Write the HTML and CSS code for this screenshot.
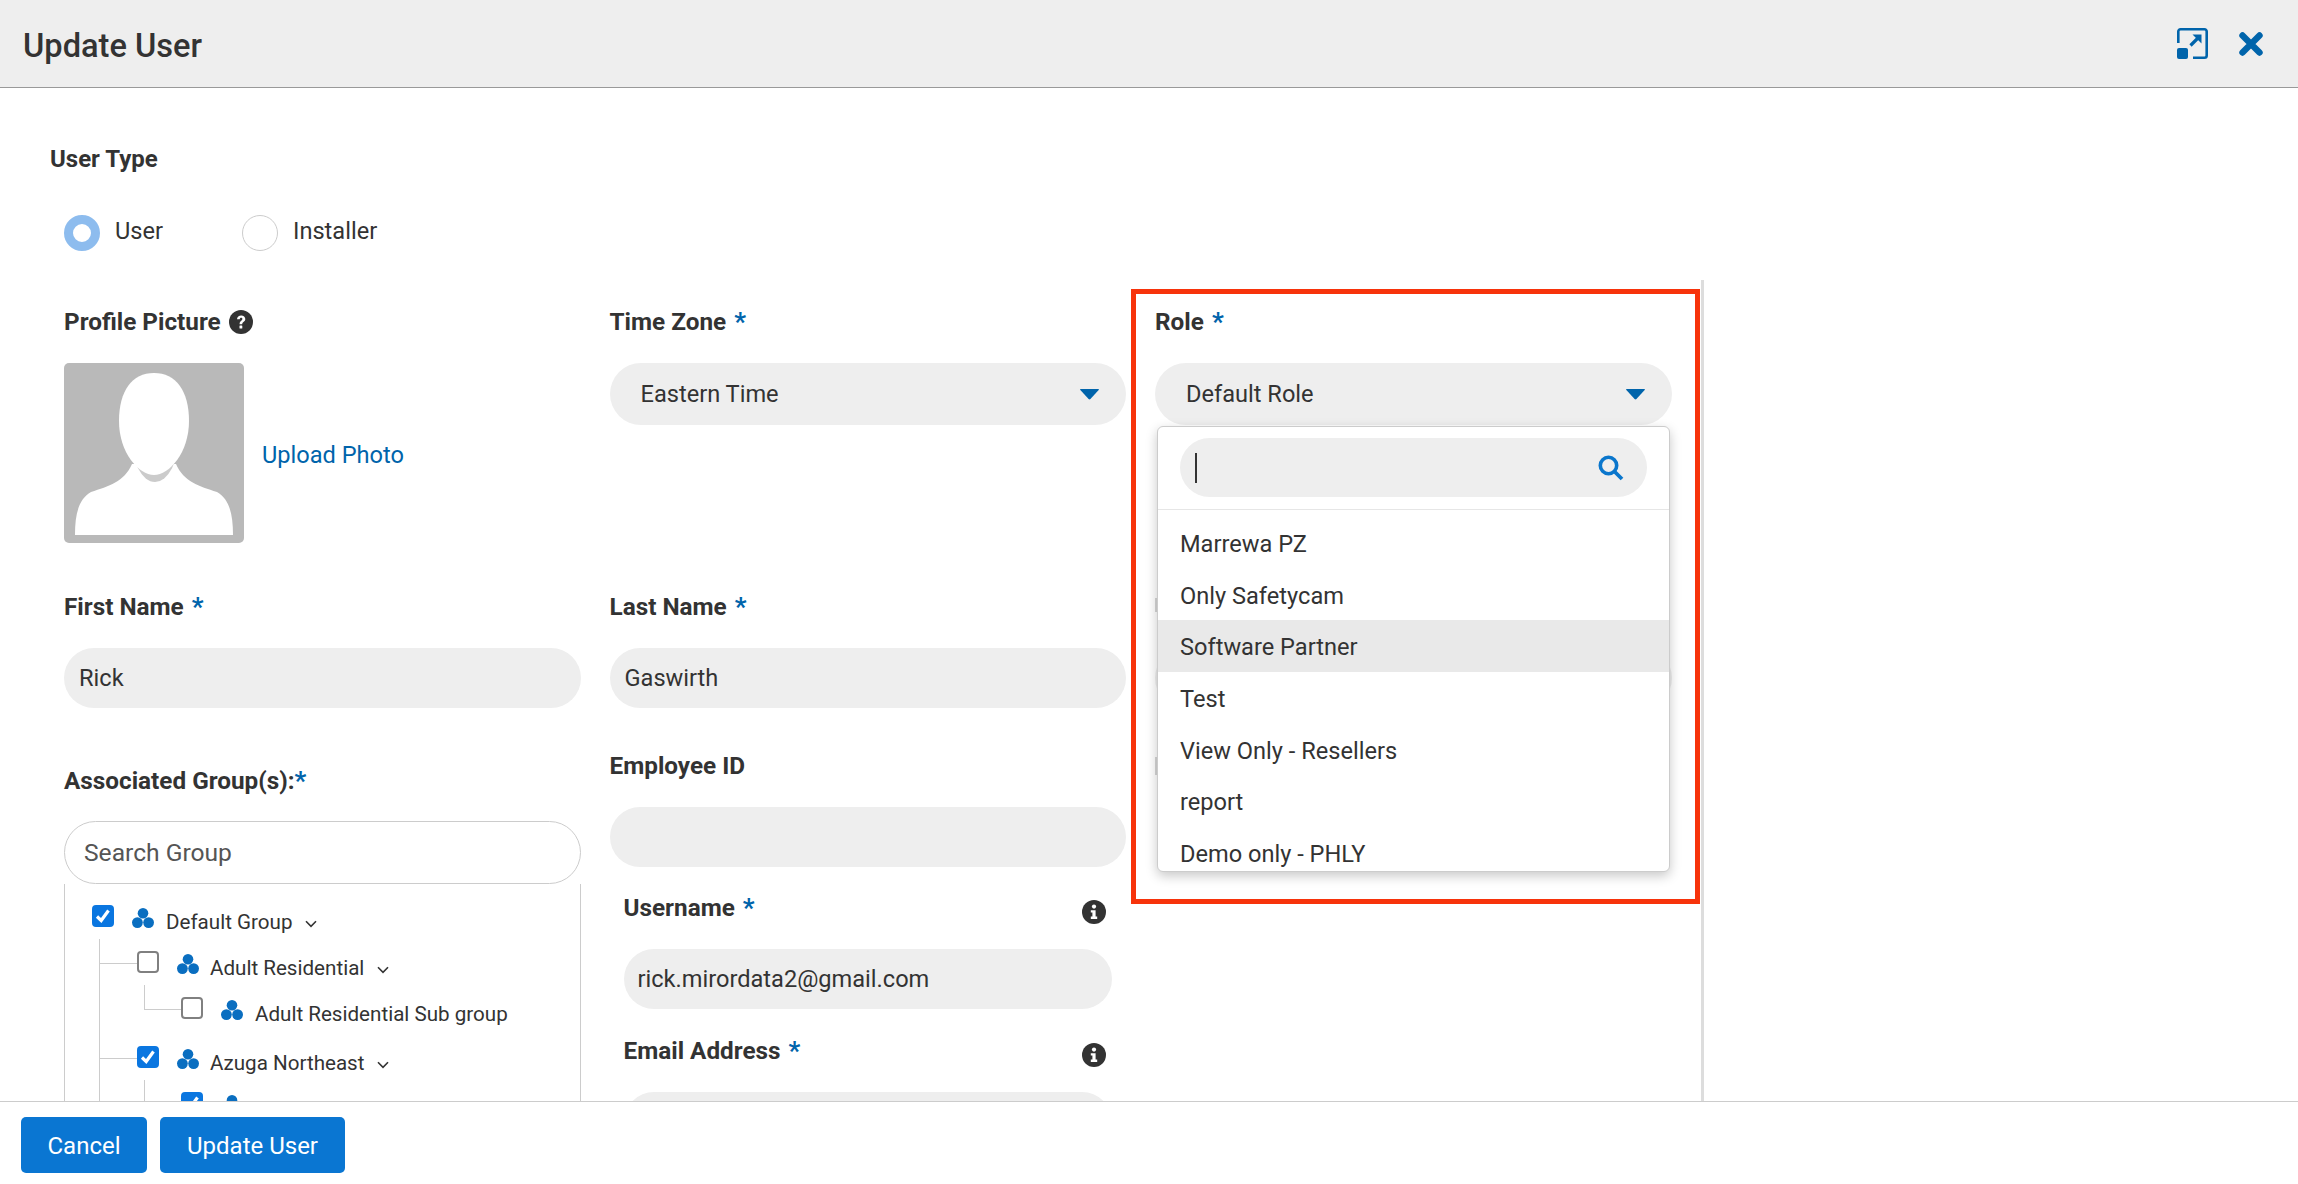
FILE: index.html
```html
<!DOCTYPE html>
<html lang="en">
<head>
<meta charset="utf-8">
<title>Update User</title>
<link rel="stylesheet" href="styles.css">
</head>
<body>
<svg class="defs" width="0" height="0" aria-hidden="true">
  <symbol id="grp" viewBox="0 0 22 20"><circle cx="11" cy="5.3" r="5.3"/><circle cx="5.4" cy="14.6" r="5.4"/><circle cx="16.6" cy="14.6" r="5.4"/></symbol>
  <symbol id="chev" viewBox="0 0 12 8"><path d="M1 1.2 6 6.4 11 1.2" fill="none" stroke="#333" stroke-width="1.6"/></symbol>
  <symbol id="caret" viewBox="0 0 22 12"><path d="M1.5 0H20.5Q22 0 21 1.2L12 11Q11 12 10 11L1 1.2Q0 0 1.5 0Z"/></symbol>
  <symbol id="tick" viewBox="0 0 22 22"><path d="M5 11.5 9.2 15.5 16.5 5.5" fill="none" stroke="#fff" stroke-width="3.2"/></symbol>
  <symbol id="info" viewBox="0 0 24 24"><circle cx="12" cy="12" r="12" fill="#333"/><circle cx="12" cy="6.6" r="2.1" fill="#fff"/><path d="M8.8 10.2H13.6V16.6H15.2V19H8.8V16.6H10.4V12.6H8.8Z" fill="#fff"/></symbol>
</svg>

<header class="topbar">
  <h1 class="title">Update User</h1>
  <div class="topicons">
    <svg class="ico-expand" viewBox="0 0 31 31"><path d="M1.3 15V3.5A2.2 2.2 0 0 1 3.5 1.3H27.5A2.2 2.2 0 0 1 29.7 3.5V27.5A2.2 2.2 0 0 1 27.5 29.7H16" fill="none" stroke="#0064ab" stroke-width="2.6"/><rect x="0" y="20" width="11" height="11" rx="2" fill="#0064ab"/><path d="M13.5 17.5 22 9" fill="none" stroke="#0064ab" stroke-width="3.2"/><path d="M15.5 6.5H24.5V15.5Z" fill="#0064ab"/></svg>
    <svg class="ico-close" viewBox="0 0 24 24"><path d="M3.5 3.5 20.5 20.5M20.5 3.5 3.5 20.5" fill="none" stroke="#0064ab" stroke-width="6.4" stroke-linecap="round"/></svg>
  </div>
</header>

<main class="content">
  <div class="type-title">User Type</div>
  <div class="radios">
    <span class="radio radio-on"></span><span class="radio-text">User</span>
    <span class="radio"></span><span class="radio-text">Installer</span>
  </div>

  <div class="form-grid">
    <section class="col">
      <div class="label">Profile Picture <svg class="help" viewBox="0 0 24 24"><circle cx="12" cy="12" r="12" fill="#333"/><path d="M8 9.3C8 6.8 10 5.4 12.2 5.4 14.6 5.4 16.3 6.9 16.3 9 16.3 11.8 13.2 11.8 13.2 14.2H10.6C10.6 10.8 13.4 10.8 13.4 9.1 13.4 8.3 12.9 7.8 12.1 7.8 11.2 7.8 10.8 8.4 10.7 9.3Z" fill="#fff"/><rect x="10.5" y="15.6" width="2.8" height="2.8" rx=".5" fill="#fff"/></svg></div>
      <div class="photo-row">
        <svg class="avatar" viewBox="0 0 180 180">
          <rect width="180" height="180" rx="5" fill="#b9b9b9"/>
          <path d="M11 172C11 150 15 136 27 129 45 123 60 119 68 101H112C120 119 135 123 153 129 165 136 169 150 169 172Z" fill="#fff"/>
          <ellipse cx="91" cy="72" rx="24" ry="47" fill="#cbcbcb"/>
          <path d="M90 10C112 10 125 28 125 58 125 90 105 112 90 112 75 112 55 90 55 58 55 28 68 10 90 10Z" fill="#fff"/>
        </svg>
        <a class="link">Upload Photo</a>
      </div>
      <div class="label first-name">First Name <span class="req">*</span></div>
      <div class="pill input-sm">Rick</div>
      <div class="label assoc">Associated Group(s):<span class="req req-tight">*</span></div>
      <div class="group-search">Search Group</div>
      <div class="tree">
        <div class="tree-row lvl0"><span class="cb on"><svg><use href="#tick"/></svg></span><svg class="grp"><use href="#grp"/></svg><span>Default Group</span><svg class="chev"><use href="#chev"/></svg></div>
        <div class="tree-row lvl1"><i class="conn"></i><span class="cb"></span><svg class="grp"><use href="#grp"/></svg><span>Adult Residential</span><svg class="chev"><use href="#chev"/></svg></div>
        <div class="tree-row lvl2 sub"><i class="conn"></i><span class="cb"></span><svg class="grp"><use href="#grp"/></svg><span>Adult Residential Sub group</span></div>
        <div class="tree-row lvl1"><i class="conn"></i><span class="cb on"><svg><use href="#tick"/></svg></span><svg class="grp"><use href="#grp"/></svg><span>Azuga Northeast</span><svg class="chev"><use href="#chev"/></svg></div>
        <div class="tree-row lvl2"><i class="conn conn-v"></i><span class="cb on"><svg><use href="#tick"/></svg></span><svg class="grp"><use href="#grp"/></svg></div>
        <i class="trunk"></i>
      </div>
    </section>

    <section class="col">
      <div class="label">Time Zone <span class="req">*</span></div>
      <div class="pill select">Eastern Time<svg class="caret"><use href="#caret"/></svg></div>
      <div class="label last-name">Last Name <span class="req">*</span></div>
      <div class="pill input-sm">Gaswirth</div>
      <div class="label emp">Employee ID</div>
      <div class="pill input-sm"></div>
      <div class="inner">
        <div class="label inner-label">Username <span class="req">*</span><svg class="info"><use href="#info"/></svg></div>
        <div class="pill input-sm user-input">rick.mirordata2@gmail.com</div>
        <div class="label inner-label">Email Address <span class="req">*</span><svg class="info"><use href="#info"/></svg></div>
        <div class="pill input-sm user-input"></div>
      </div>
    </section>

    <section class="col role-col">
      <div class="label">Role <span class="req">*</span></div>
      <div class="pill select">Default Role<svg class="caret"><use href="#caret"/></svg></div>
      <i class="stem stem-a"></i>
      <div class="pill input-sm hidden-pill"></div>
      <i class="stem stem-b"></i>

      <div class="dropdown">
        <div class="dd-search-wrap">
          <div class="dd-search"><i class="cursor"></i>
            <svg class="search-ico" viewBox="0 0 26 26"><circle cx="10.5" cy="10.5" r="8.2" fill="none" stroke="#0a76cc" stroke-width="3.6"/><path d="M16.5 16.5 24 24" stroke="#0a76cc" stroke-width="3.8"/></svg>
          </div>
        </div>
        <ul class="dd-list">
          <li>Marrewa PZ</li>
          <li>Only Safetycam</li>
          <li class="hover">Software Partner</li>
          <li>Test</li>
          <li>View Only - Resellers</li>
          <li>report</li>
          <li>Demo only - PHLY</li>
        </ul>
      </div>
    </section>
  </div>
  <div class="highlight"></div>
</main>

<footer class="footer">
  <button class="btn btn-cancel">Cancel</button>
  <button class="btn btn-update">Update User</button>
</footer>
</body>
</html>
```
FILE: styles.css
```css
* { box-sizing: border-box; }
html, body { margin: 0; height: 100%; }
body {
  display: flex; flex-direction: column; height: 100vh; overflow: hidden;
  font-family: Roboto, "Liberation Sans", sans-serif; font-size: 23.6px; color: #333; background: #fff;
}
.defs { position: absolute; }
.topbar {
  height: 88px; flex: none; background: #eee; border-bottom: 1px solid #999;
  display: flex; align-items: center; justify-content: space-between; padding: 0 35px 0 23px;
}
.title { margin: 5px 0 0; font-size: 32.6px; font-weight: 500; color: #333; }
.topicons { display: flex; align-items: center; gap: 31px; }
.ico-expand { width: 31px; height: 31px; display: block; }
.ico-close { width: 24px; height: 24px; display: block; }

.content { flex: 1; min-height: 0; overflow: hidden; position: relative; padding: 56px 0 0 0; }
.type-title { font-weight: 700; font-size: 24px; line-height: 30px; margin-left: 50px; }
.radios { display: flex; align-items: center; margin: 40px 0 0 64px; height: 38px; }
.radio { width: 36px; height: 36px; border-radius: 50%; border: 1px solid #ccc; background: #fff; flex: none; }
.radio-on { border: 9px solid #8dbcee; }
.radio-text { margin: 0 79px 4px 15px; line-height: 30px; }

.form-grid {
  display: grid; grid-template-columns: repeat(3, 516.5px); column-gap: 29px;
  width: 1704px; padding: 27px 29px 0 64px; margin-top: 28px;
  border-right: 3px solid #ddd; height: 900px;
}
.col { display: flex; flex-direction: column; position: relative; min-width: 0; }
.label { font-weight: 700; font-size: 24.3px; line-height: 30px; height: 30px; display: flex; align-items: center; white-space: pre; flex: none; }
.req { color: #0064ab; font-size: 26px; margin-left: 2px; }
.req-tight { margin-left: 0; }
.help { width: 24px; height: 24px; flex: none; margin-left: 2px; }
.photo-row { display: flex; align-items: center; gap: 18px; margin-top: 26px; height: 180px; flex: none; }
.avatar { width: 180px; height: 180px; flex: none; display: block; }
.link { color: #0064ab; margin-top: 3px; }
.first-name { margin-top: 49px; }
.pill { background: #eee; border-radius: 31px; display: flex; align-items: center; flex: none; }
.input-sm { height: 60px; margin-top: 26px; padding-left: 15px; }
.select { height: 62px; margin-top: 26px; padding: 0 26px 0 31px; justify-content: space-between; }
.caret { width: 21px; height: 11px; fill: #0064ab; }
.assoc { margin-top: 58px; }
.group-search { height: 63px; margin-top: 25px; border: 1px solid #ccc; border-radius: 32px; display: flex; align-items: center; padding-left: 19px; color: #555; flex: none; font-size: 24.6px; }
.tree { position: relative; flex: none; height: 300px; border-left: 1px solid #ccc; border-right: 1px solid #ccc; padding-top: 15px; font-size: 20.6px; }
.tree-row { position: relative; height: 46px; display: flex; align-items: center; }
.lvl0 { padding-left: 27px; }
.lvl1 { padding-left: 72px; }
.lvl2 { padding-left: 116px; }
.sub { margin-bottom: 3px; }
.cb { width: 22px; height: 22px; border: 2px solid #808080; border-radius: 4px; background: #fff; flex: none; margin-right: 18px; position: relative; top: -6px; }
.cb svg { position: absolute; inset: -2px; width: 22px; height: 22px; }
.cb.on { background: #0a76e0; border-color: #0a76e0; }
.grp { width: 22px; height: 20px; fill: #0a6ec0; flex: none; margin-right: 12px; position: relative; top: -4px; }
.lvl1 .grp { margin-right: 11px; }
.chev { width: 12px; height: 8px; margin-left: 13px; flex: none; position: relative; top: 2px; }
.conn { position: absolute; border-left: 1px solid #ccc; border-bottom: 1px solid #ccc; }
.lvl1 .conn { left: 34px; width: 38px; top: 0; height: 19px; border-left: 0; }
.lvl2 .conn { left: 79px; width: 37px; top: -6px; height: 25px; }
.lvl2 .conn-v { border-bottom: 0; }
.trunk { position: absolute; left: 34px; top: 55px; bottom: 0; border-left: 1px solid #ccc; }
.emp { margin-top: 43px; }
.last-name { margin-top: 167px; }
.inner { padding: 0 14px; margin-top: -1px; }
.inner-label { margin-top: 27px; position: relative; }
.info { position: absolute; right: 6px; top: 7px; width: 24px; height: 24px; }
.user-input { padding-left: 14px; }
.stem { display: block; width: 2px; background: #d6d6d6; flex: none; }
.stem-a { height: 14px; margin-top: 173px; }
.hidden-pill { margin-top: 36px; }
.stem-b { height: 18px; margin-top: 49px; }

.dropdown {
  position: absolute; left: 2px; top: 119px; width: 513px; height: 446px;
  background: #fff; border: 1px solid #ccc; border-radius: 6px; overflow: hidden;
  box-shadow: 0 4px 12px rgba(0,0,0,.22);
}
.dd-search-wrap { padding: 11px 22px; border-bottom: 1px solid #e6e6e6; height: 83px; }
.dd-search { height: 59px; background: #eee; border-radius: 30px; display: flex; align-items: center; justify-content: space-between; padding: 0 23px 0 15px; }
.cursor { width: 2px; height: 30px; background: #333; }
.search-ico { width: 26px; height: 26px; }
.dd-list { list-style: none; margin: 7px 0 0; padding: 0; }
.dd-list li { height: 51.7px; line-height: 54.5px; padding-left: 22px; }
.dd-list .hover { background: #e9e9e9; }
.highlight { position: absolute; left: 1131px; top: 201px; width: 569px; height: 615px; border: 5px solid #f7330b; pointer-events: none; }

.footer { height: 83px; flex: none; border-top: 1px solid #ccc; background: #fff; display: flex; gap: 13px; padding: 15px 0 0 21px; position: relative; }
.btn { height: 56px; border: 0; border-radius: 5px; background: #0a76d2; color: #fff; font: 400 24px Roboto, "Liberation Sans", sans-serif; padding: 2px 0 0; }
.btn-cancel { width: 126px; }
.btn-update { width: 185px; }
```
